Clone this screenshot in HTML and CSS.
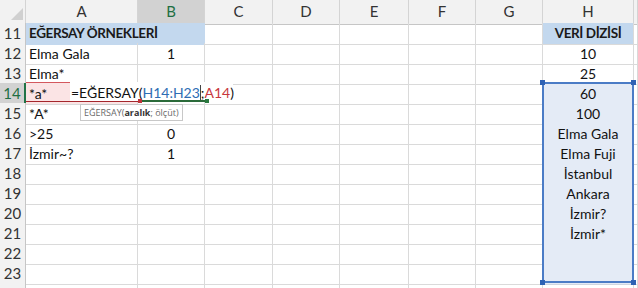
FILE: index.html
```html
<!DOCTYPE html>
<html lang="tr">
<head>
<meta charset="utf-8">
<title>EĞERSAY</title>
<link rel="stylesheet" href="styles.css">
</head>
<body>
<div class="sheet">
  <div class="row head">
    <div class="c corner"><svg width="26" height="23" viewBox="0 0 26 23"><polygon points="23,8 23,20 11,20" fill="#d0d0d0"/></svg></div>
    <div class="c h">A</div><div class="c h hsel">B</div><div class="c h">C</div><div class="c h">D</div><div class="c h">E</div><div class="c h">F</div><div class="c h">G</div><div class="c h">H</div><div class="c h"></div>
  </div>
  <div class="row">
    <div class="c rh">11</div><div class="c span2 title">EĞERSAY ÖRNEKLERİ</div><div class="c"></div><div class="c"></div><div class="c"></div><div class="c"></div><div class="c"></div><div class="c title ctr">VERİ DİZİSİ</div><div class="c"></div>
  </div>
  <div class="row">
    <div class="c rh">12</div><div class="c">Elma Gala</div><div class="c ctr">1</div><div class="c"></div><div class="c"></div><div class="c"></div><div class="c"></div><div class="c"></div><div class="c ctr">10</div><div class="c"></div>
  </div>
  <div class="row">
    <div class="c rh">13</div><div class="c">Elma*</div><div class="c"></div><div class="c"></div><div class="c"></div><div class="c"></div><div class="c"></div><div class="c"></div><div class="c ctr">25</div><div class="c"></div>
  </div>
  <div class="row">
    <div class="c rh rhsel">14</div><div class="c ref">*a*</div><div class="c"></div><div class="c"></div><div class="c"></div><div class="c"></div><div class="c"></div><div class="c"></div><div class="c ctr sel">60</div><div class="c"></div>
  </div>
  <div class="row">
    <div class="c rh">15</div><div class="c">*A*</div><div class="c"></div><div class="c"></div><div class="c"></div><div class="c"></div><div class="c"></div><div class="c"></div><div class="c ctr sel">100</div><div class="c"></div>
  </div>
  <div class="row">
    <div class="c rh">16</div><div class="c">&gt;25</div><div class="c ctr">0</div><div class="c"></div><div class="c"></div><div class="c"></div><div class="c"></div><div class="c"></div><div class="c ctr sel">Elma Gala</div><div class="c"></div>
  </div>
  <div class="row">
    <div class="c rh">17</div><div class="c">İzmir~?</div><div class="c ctr">1</div><div class="c"></div><div class="c"></div><div class="c"></div><div class="c"></div><div class="c"></div><div class="c ctr sel">Elma Fuji</div><div class="c"></div>
  </div>
  <div class="row">
    <div class="c rh">18</div><div class="c"></div><div class="c"></div><div class="c"></div><div class="c"></div><div class="c"></div><div class="c"></div><div class="c"></div><div class="c ctr sel">İstanbul</div><div class="c"></div>
  </div>
  <div class="row">
    <div class="c rh">19</div><div class="c"></div><div class="c"></div><div class="c"></div><div class="c"></div><div class="c"></div><div class="c"></div><div class="c"></div><div class="c ctr sel">Ankara</div><div class="c"></div>
  </div>
  <div class="row">
    <div class="c rh">20</div><div class="c"></div><div class="c"></div><div class="c"></div><div class="c"></div><div class="c"></div><div class="c"></div><div class="c"></div><div class="c ctr sel">İzmir?</div><div class="c"></div>
  </div>
  <div class="row">
    <div class="c rh">21</div><div class="c"></div><div class="c"></div><div class="c"></div><div class="c"></div><div class="c"></div><div class="c"></div><div class="c"></div><div class="c ctr sel">İzmir*</div><div class="c"></div>
  </div>
  <div class="row">
    <div class="c rh">22</div><div class="c"></div><div class="c"></div><div class="c"></div><div class="c"></div><div class="c"></div><div class="c"></div><div class="c"></div><div class="c sel"></div><div class="c"></div>
  </div>
  <div class="row">
    <div class="c rh">23</div><div class="c"></div><div class="c"></div><div class="c"></div><div class="c"></div><div class="c"></div><div class="c"></div><div class="c"></div><div class="c sel"></div><div class="c"></div>
  </div>
  <div class="row">
    <div class="c rh"></div><div class="c"></div><div class="c"></div><div class="c"></div><div class="c"></div><div class="c"></div><div class="c"></div><div class="c"></div><div class="c"></div><div class="c"></div>
  </div>

  <div class="selbox"><span class="hd tl"></span><span class="hd tr"></span><span class="hd bl"></span><span class="hd br"></span></div>
  <div class="editor">=EĞERSAY(<span class="rb">H14:H23</span><span class="caret"></span>;<span class="rr">A14</span>)</div>
  <div class="uline red"></div><div class="uline green"></div>
  <div class="sq sqred"></div><div class="sq sqgreen"></div>
  <div class="tip">EĞERSAY(<b>aralık</b>; ölçüt)</div>
</div>
</body>
</html>
```
FILE: styles.css
```css
html, body {
  margin: 0;
  padding: 0;
  background: #fff;
  overflow: hidden;
}
.sheet {
  position: relative;
  width: 638px;
  height: 288px;
  overflow: hidden;
  font-family: "Lato", "Open Sans", sans-serif;
  font-size: 14px;
  color: #111;
}
.row {
  display: grid;
  grid-template-columns: 26px 112px 67px 68px 67px 69px 67px 67px 91px 1fr;
  height: 20px;
}
.row.head {
  height: 23px;
}
.c {
  box-sizing: border-box;
  border-right: 1px solid #dadada;
  border-bottom: 1px solid #dadada;
  padding-left: 3px;
  line-height: 21px;
  white-space: nowrap;
  overflow: visible;
}
.head .c {
  background: #f2f2f2;
  border-right: 1px solid #d4d4d4;
  border-bottom: 1px solid #c6c6c6;
  text-align: center;
  padding-left: 0;
  line-height: 23px;
  color: #333;
  font-size: 15px;
}
.head .corner {
  padding: 0;
  line-height: 0;
}
.head .hsel {
  background: #d2d2d2;
  color: #1e6f43;
  border-bottom: 2px solid #217346;
}
.rh {
  background: #f2f2f2;
  border-right: 1px solid #c6c6c6;
  border-bottom: 1px solid #d4d4d4;
  text-align: center;
  padding-left: 0;
  color: #333;
  font-size: 15px;
}
.rhsel {
  background: #d2d2d2;
  color: #1e6f43;
  border-right: 2px solid #217346;
}
.span2 {
  grid-column: span 2;
}
.title {
  background: #c3d8ee;
  font-weight: bold;
  font-size: 13.5px;
  letter-spacing: -0.4px;
  border-right-color: #c3d8ee;
  border-bottom-color: #c3d8ee;
  color: #1a1a1a;
}
.row .title.ctr {
  border-right-color: #dadada;
  border-bottom-color: #dadada;
}
.ctr {
  text-align: center;
  padding-left: 0;
}
.sel {
  background: #e4ebf6;
  border-bottom-color: #cfd6e0;
}
.ref {
  background: #fbe4e5;
  border-top: 1px solid #d4585e;
  margin-top: -1px;
  line-height: 21px;
}
.selbox {
  position: absolute;
  left: 542px;
  top: 82px;
  width: 92px;
  height: 201px;
  box-sizing: border-box;
  border: 2px solid #4b7cc6;
}
.hd {
  position: absolute;
  width: 5px;
  height: 5px;
  background: #2f62b4;
}
.hd.tl { left: -4px; top: -4px; }
.hd.tr { right: -4px; top: -4px; }
.hd.bl { left: -4px; bottom: -4px; }
.hd.br { right: -4px; bottom: -4px; }
.editor {
  position: absolute;
  left: 70px;
  top: 82px;
  width: 162px;
  height: 19px;
  background: #fff;
  padding-left: 1px;
  line-height: 22px;
  white-space: nowrap;
  color: #111;
}
.rb { color: #2e6db4; }
.rr { color: #c8373d; }
.caret {
  display: inline-block;
  width: 1px;
  height: 15px;
  background: #444;
  vertical-align: -2px;
}
.uline {
  position: absolute;
  top: 101px;
  height: 1px;
}
.uline.red {
  left: 26px;
  width: 114px;
  background: #a4262c;
}
.uline.green {
  left: 140px;
  width: 67px;
  height: 2px;
  top: 100px;
  background: #2b6b3a;
}
.sq {
  position: absolute;
  top: 99px;
  width: 4px;
  height: 4px;
}
.sqred { left: 138px; background: #c0353b; }
.sqgreen { left: 205px; background: #2b7a40; }
.tip {
  position: absolute;
  left: 80px;
  top: 104px;
  height: 17px;
  box-sizing: border-box;
  padding: 0 3px;
  border: 1px solid #c8c8c8;
  background: #fff;
  font-family: "Open Sans", "Noto Sans", sans-serif;
  font-size: 9px;
  line-height: 15px;
  color: #6a6a6a;
  white-space: nowrap;
}
.tip b {
  color: #333;
}
```
